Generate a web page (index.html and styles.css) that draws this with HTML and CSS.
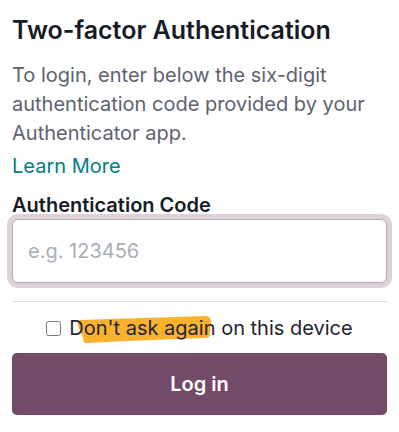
FILE: index.html
```html
<!DOCTYPE html>
<html lang="en">

<head>
    <meta charset="UTF-8">
    <meta name="viewport" content="width=device-width, initial-scale=1.0">
    <title>Two-factor Authentication</title>
    <link rel="stylesheet" href="styles.css">
</head>

<body>
    <div class="totp-card">
        <h3 class="totp-title">Two-factor Authentication</h3>
        <p class="totp-help">To login, enter below the six-digit authentication code provided by your Authenticator app.</p>
        <a href="#" class="learn-link">Learn More</a>
        <form class="totp-form">
            <div class="form-group">
                <label for="totp_token">Authentication Code</label>
                <input type="text" id="totp_token" class="form-input" placeholder="e.g. 123456">
            </div>
            <hr class="divider">
            <div class="trust-row">
                <input type="checkbox" id="trust" class="trust-check">
                <label for="trust" class="trust-label"><span class="highlight"><svg class="brush" viewBox="0 0 134 27" preserveAspectRatio="none"><path d="M4 4 C40 3 90 1 128 0 C132 0 134 2 134 6 L133 18 C133 21 131 22 128 22 C90 23 50 25 10 27 C7 27 6 25 6 22 L1 10 C0 6 1 4 4 4 Z" fill="#fbb130"/></svg><span class="hl-text">Don't ask again</span></span> on this device</label>
            </div>
            <button type="submit" class="login-btn">Log in</button>
        </form>
    </div>
</body>

</html>
```

FILE: styles.css
```css
/* Reset */
* {
    margin: 0;
    padding: 0;
    box-sizing: border-box;
}

body {
    font-family: 'Inter', 'Noto Sans', sans-serif;
    background-color: #fff;
    color: #1f2430;
}

/* Card */
.totp-card {
    padding: 15px 12px 0 12px;
}

.totp-title {
    font-size: 25px;
    font-weight: 600;
    line-height: 30px;
    color: #161b26;
    margin-bottom: 16px;
}

.totp-help {
    font-size: 20px;
    line-height: 29px;
    color: #5e6270;
}

.learn-link {
    display: block;
    font-size: 20px;
    line-height: 29px;
    margin-top: 4px;
    margin-bottom: 11px;
    color: #017e84;
    text-decoration: none;
}

/* Form */
.form-group {
    margin-bottom: 18px;
}

label {
    display: block;
    font-size: 20px;
    font-weight: 600;
    line-height: 26px;
    color: #161b26;
    margin-bottom: 1px;
}

.form-input {
    width: 100%;
    height: 64px;
    padding: 0 15px;
    border: 1px solid #b8a6b3;
    border-radius: 6px;
    font-family: 'Inter', 'Noto Sans', sans-serif;
    font-size: 20px;
    color: #1f2430;
    outline: none;
    box-shadow: 0 0 0 5px #ddd1da;
}

.form-input::placeholder {
    color: #a9adb5;
}

.divider {
    border: none;
    border-top: 1px solid #dcdde0;
    margin-bottom: 13px;
}

/* Trust device row */
.trust-row {
    display: flex;
    justify-content: center;
    align-items: center;
    gap: 8px;
    margin-bottom: 12px;
}

.trust-check {
    width: 15px;
    height: 15px;
    margin: 0;
}

.trust-label {
    display: inline;
    font-weight: 400;
    margin: 0;
    color: #1f2430;
    line-height: 26px;
}

.highlight {
    position: relative;
    display: inline-block;
}

.brush {
    position: absolute;
    left: 8px;
    top: 1px;
    width: 134px;
    height: 27px;
    z-index: 0;
}

.hl-text {
    position: relative;
    z-index: 1;
}

/* Button */
.login-btn {
    width: 100%;
    height: 62px;
    border: none;
    border-radius: 5px;
    background-color: #714b67;
    color: #fff;
    font-family: 'Inter', 'Noto Sans', sans-serif;
    font-size: 20px;
    font-weight: 600;
    cursor: pointer;
}
```
